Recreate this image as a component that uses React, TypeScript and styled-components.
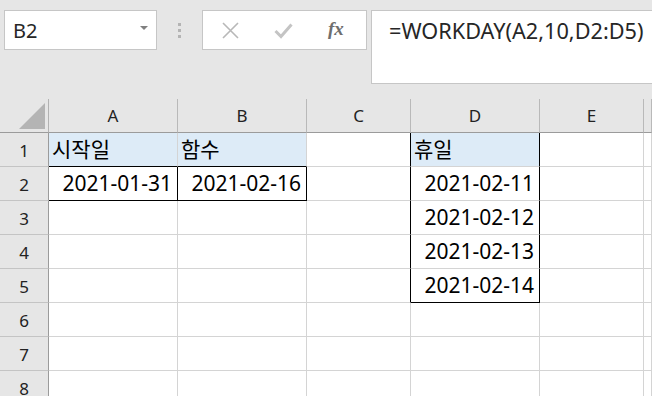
import React from "react";
import styled, { createGlobalStyle } from "styled-components";

const Global = createGlobalStyle`
  html, body { margin: 0; padding: 0; background: #e6e6e6; }
  body { width: 652px; height: 396px; overflow: hidden; font-family: "Noto Sans", "Noto Sans CJK KR", sans-serif; }
`;

const Page = styled.div`
  width: 652px;
  height: 396px;
  overflow: hidden;
  display: flex;
  flex-direction: column;
  background: #e6e6e6;
`;

const TopBar = styled.div`
  height: 99px;
  flex: 0 0 99px;
  display: flex;
  align-items: flex-start;
  padding: 10px 0 0 4px;
  box-sizing: border-box;
  overflow: hidden;
`;

const NameBox = styled.div`
  flex: 0 0 153px;
  height: 40px;
  box-sizing: border-box;
  background: #fff;
  border: 1px solid #c6c6c6;
  display: flex;
  align-items: center;
  justify-content: space-between;
  padding: 0 8px 0 8px;
  font-size: 20px;
  color: #262626;
`;

const Caret = styled.span`
  width: 0;
  height: 0;
  border-left: 4px solid transparent;
  border-right: 4px solid transparent;
  border-top: 4px solid #808080;
  margin-top: -4px;
`;

const Dots = styled.div`
  flex: 0 0 45px;
  height: 40px;
  display: flex;
  flex-direction: column;
  align-items: center;
  justify-content: center;
  gap: 3px;
  span {
    width: 3px;
    height: 3px;
    background: #b4b4b4;
  }
`;

const Buttons = styled.div`
  flex: 0 0 165px;
  height: 40px;
  box-sizing: border-box;
  background: #fff;
  border: 1px solid #c6c6c6;
  display: flex;
  align-items: center;
  gap: 35px;
  padding: 0 0 0 19px;
`;

const Fx = styled.span`
  font-family: "Liberation Serif", "DejaVu Serif", serif;
  font-style: italic;
  font-weight: bold;
  font-size: 19px;
  color: #6e6e6e;
  margin-top: -2px;
`;

const FormulaBar = styled.div`
  margin-left: 4px;
  flex: 0 0 320px;
  height: 74px;
  box-sizing: border-box;
  background: #fff;
  border: 1px solid #c6c6c6;
  padding: 5px 0 0 17px;
  font-size: 21.7px;
  color: #262626;
  white-space: nowrap;
  line-height: 30px;
`;

const Grid = styled.div`
  display: grid;
  grid-template-columns: 49px 129px 129px 104px 129px 104px 1fr;
  grid-auto-rows: 34px;
  background: #fff;
`;

const Corner = styled.div`
  background: #e6e6e6;
  border-right: 1px solid #b2b2b2;
  border-bottom: 1px solid #9b9b9b;
  box-sizing: border-box;
  display: flex;
  align-items: flex-end;
  justify-content: flex-end;
  padding: 0 3px 3px 0;
`;

const ColHead = styled.div`
  background: #e6e6e6;
  border-right: 1px solid #b9b9b9;
  border-bottom: 1px solid #9b9b9b;
  box-sizing: border-box;
  display: flex;
  align-items: center;
  justify-content: center;
  font-size: 17px;
  color: #222;
`;

const RowHead = styled.div`
  background: #e6e6e6;
  border-right: 1px solid #9b9b9b;
  border-bottom: 1px solid #c4c4c4;
  box-sizing: border-box;
  display: flex;
  align-items: center;
  justify-content: center;
  font-size: 17px;
  color: #222;
  padding-top: 1px;
`;

const Cell = styled.div<{ $fill?: boolean; $right?: boolean; $bR?: boolean; $bB?: boolean }>`
  background: ${(p) => (p.$fill ? "#ddebf7" : "#fff")};
  border-right: 1px solid ${(p) => (p.$bR ? "#000" : "#d4d4d4")};
  border-bottom: 1px solid ${(p) => (p.$bB ? "#000" : "#d4d4d4")};
  box-sizing: border-box;
  font-size: 21px;
  line-height: 33px;
  color: #000;
  text-align: ${(p) => (p.$right ? "right" : "left")};
  padding: ${(p) => (p.$right ? "0 5px 0 0" : "0 0 0 3px")};
  white-space: nowrap;
  overflow: hidden;
`;

type C = { t?: string; fill?: boolean; right?: boolean; bR?: boolean; bB?: boolean };

const cols = ["A", "B", "C", "D", "E", ""];

const rows: C[][] = [
  [
    { t: "시작일", fill: true, bB: true },
    { t: "함수", fill: true, bB: true },
    { bR: true },
    { t: "휴일", fill: true, bR: true },
    {},
    {},
  ],
  [
    { t: "2021-01-31", right: true, bR: true, bB: true },
    { t: "2021-02-16", right: true, bR: true, bB: true },
    { bR: true },
    { t: "2021-02-11", right: true, bR: true },
    {},
    {},
  ],
  [{}, {}, { bR: true }, { t: "2021-02-12", right: true, bR: true }, {}, {}],
  [{}, {}, { bR: true }, { t: "2021-02-13", right: true, bR: true }, {}, {}],
  [{}, {}, { bR: true }, { t: "2021-02-14", right: true, bR: true, bB: true }, {}, {}],
  [{}, {}, {}, {}, {}, {}],
  [{}, {}, {}, {}, {}, {}],
  [{}, {}, {}, {}, {}, {}],
];

export default function App() {
  return (
    <Page>
      <Global />
      <TopBar>
        <NameBox>
          <span>B2</span>
          <Caret />
        </NameBox>
        <Dots>
          <span />
          <span />
          <span />
        </Dots>
        <Buttons>
          <svg width="17" height="17" viewBox="0 0 17 17">
            <path d="M1 1 L16 16 M16 1 L1 16" stroke="#b8b8b8" strokeWidth="1.6" fill="none" />
          </svg>
          <svg width="19" height="17" viewBox="0 0 19 17">
            <path d="M1.5 9 L7 14.5 L17.5 2.5" stroke="#c4c4c4" strokeWidth="3" fill="none" />
          </svg>
          <Fx>fx</Fx>
        </Buttons>
        <FormulaBar>=WORKDAY(A2,10,D2:D5)</FormulaBar>
      </TopBar>
      <Grid>
        <Corner>
          <svg width="26" height="26" viewBox="0 0 26 26">
            <polygon points="26,0 26,26 0,26" fill="#b4b4b4" />
          </svg>
        </Corner>
        {cols.map((c, i) => (
          <ColHead key={i}>{c}</ColHead>
        ))}
        {rows.map((r, ri) => (
          <React.Fragment key={ri}>
            <RowHead>{ri + 1}</RowHead>
            {r.map((c, ci) => (
              <Cell key={ci} $fill={c.fill} $right={c.right} $bR={c.bR} $bB={c.bB}>
                {c.t}
              </Cell>
            ))}
          </React.Fragment>
        ))}
      </Grid>
    </Page>
  );
}
